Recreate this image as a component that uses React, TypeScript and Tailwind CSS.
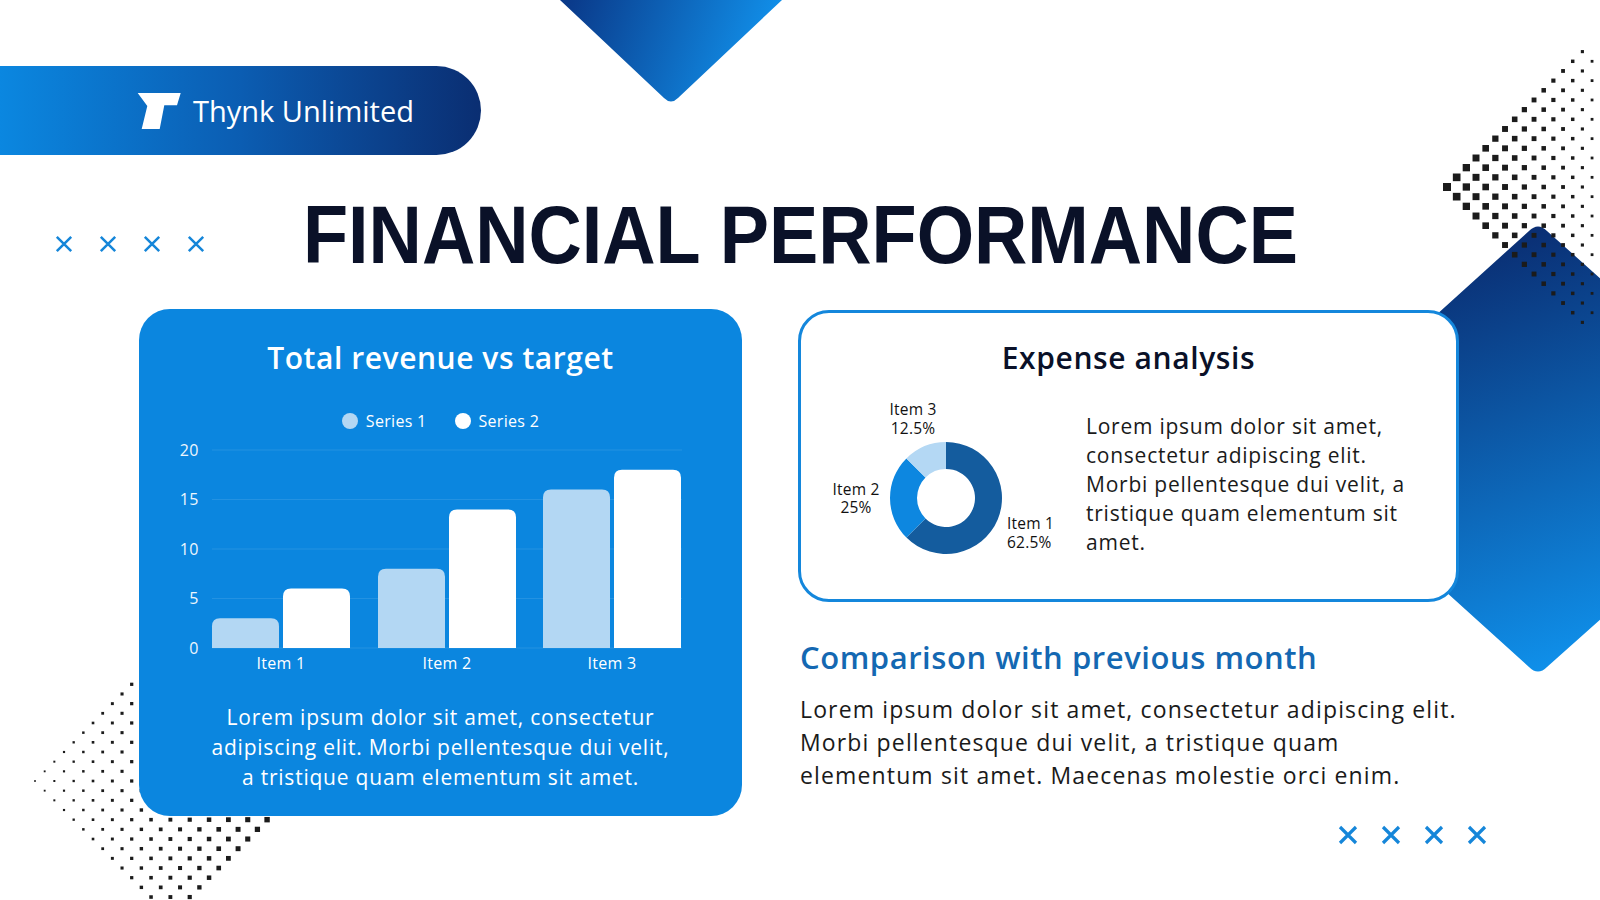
import React from "react";

const SANS = "'Open Sans', 'Liberation Sans', sans-serif";

function dotRects(
  ox: number,
  oy: number,
  step: number,
  inside: (x: number, y: number) => boolean,
  size: (x: number, y: number) => number,
  keyPrefix: string
) {
  const out: React.ReactElement[] = [];
  for (let i = -40; i <= 40; i++) {
    for (let j = -40; j <= 40; j++) {
      if (Math.abs(i + j) % 2 !== 0) continue;
      const x = ox + i * step;
      const y = oy + j * step;
      if (!inside(x, y)) continue;
      const s = size(x, y);
      out.push(
        <rect key={`${keyPrefix}-${i}-${j}`} x={x - s / 2} y={y - s / 2} width={s} height={s} fill="#1b1b1b" />
      );
    }
  }
  return out;
}

function Decorations() {
  const tr = dotRects(
    1447,
    187,
    9.67,
    (x, y) => x + y >= 1632 && y - x <= -1258 && x <= 1605 && x - y <= 1532 && x + y <= 1908,
    (x) => Math.max(2, 8 - (x - 1447) * 0.036),
    "tr"
  );
  const bl = dotRects(
    35,
    781,
    9.67,
    (x, y) => x + y >= 814 && x + y <= 1089 && y - x <= 748 && x - y <= -550 && y <= 905,
    (x) => 1.7 + (x - 35) * 0.016,
    "bl"
  );
  return (
    <svg className="absolute left-0 top-0" width={1600} height={900} viewBox="0 0 1600 900">
      <defs>
        <linearGradient id="triG" gradientUnits="userSpaceOnUse" x1="570" y1="0" x2="760" y2="70">
          <stop offset="0" stopColor="#0a3a8a" />
          <stop offset="1" stopColor="#1190ea" />
        </linearGradient>
        <linearGradient id="hexG" gradientUnits="userSpaceOnUse" x1="1480" y1="250" x2="1620" y2="640">
          <stop offset="0" stopColor="#0a2f74" />
          <stop offset="1" stopColor="#0f8fe9" />
        </linearGradient>
      </defs>
      <path d="M560,0 L664,98 Q671,105 678,98 L782,0 Z" fill="url(#triG)" />
      <path
        d="M1529,231 Q1538,222 1547,231 L1792,449 L1547,667 Q1538,676 1529,667 L1288,449 Z"
        fill="url(#hexG)"
      />
      {tr}
      {bl}
    </svg>
  );
}

function XMark({ size, stroke }: { size: number; stroke: number }) {
  return (
    <svg width={size} height={size} viewBox="0 0 20 20">
      <path d="M2,2 L18,18 M18,2 L2,18" stroke="#1586d9" strokeWidth={stroke} strokeLinecap="butt" />
    </svg>
  );
}

function barPath(x: number, w: number, top: number, base: number, r: number) {
  return `M${x},${base} L${x},${top + r} Q${x},${top} ${x + r},${top} L${x + w - r},${top} Q${x + w},${top} ${x + w},${top + r} L${x + w},${base} Z`;
}

function BarChart() {
  const base = 209;
  const unit = 9.9;
  const groups = [
    { x: 73, a: 3, b: 6, label: "Item 1" },
    { x: 239, a: 8, b: 14, label: "Item 2" },
    { x: 404, a: 16, b: 18, label: "Item 3" },
  ];
  const w = 67;
  return (
    <svg width={603} height={240} viewBox="0 0 603 240" className="block">
      {[0, 5, 10, 15, 20].map((v) => {
        const y = base - v * unit;
        return (
          <g key={v}>
            <line x1={73} x2={543} y1={y} y2={y} stroke="#ffffff" strokeOpacity={0.1} strokeWidth={1} />
            <text x={60} y={y + 5.5} textAnchor="end" fontSize={16} fill="#eef6fd" fontFamily={SANS} letterSpacing={0.5}>
              {v}
            </text>
          </g>
        );
      })}
      {groups.map((g) => (
        <g key={g.label}>
          <path d={barPath(g.x, w, base - g.a * unit, base, 8)} fill="#b3d7f3" />
          <path d={barPath(g.x + 71, w, base - g.b * unit, base, 8)} fill="#ffffff" />
          <text x={g.x + 69} y={229.5} textAnchor="middle" fontSize={16} fill="#ffffff" fontFamily={SANS} letterSpacing={0.3}>
            {g.label}
          </text>
        </g>
      ))}
    </svg>
  );
}

function Donut() {
  const cx = 145;
  const cy = 122;
  const R = 56;
  const r = 29;
  const pt = (deg: number, rad: number) => {
    const a = (deg * Math.PI) / 180;
    return [cx + rad * Math.sin(a), cy - rad * Math.cos(a)];
  };
  const seg = (a0: number, a1: number) => {
    const large = a1 - a0 > 180 ? 1 : 0;
    const [x0, y0] = pt(a0, R);
    const [x1, y1] = pt(a1, R);
    const [x2, y2] = pt(a1, r);
    const [x3, y3] = pt(a0, r);
    return `M${x0},${y0} A${R},${R} 0 ${large} 1 ${x1},${y1} L${x2},${y2} A${r},${r} 0 ${large} 0 ${x3},${y3} Z`;
  };
  const t = { fontSize: 15.5, fill: "#111111", fontFamily: SANS, letterSpacing: 0.2 } as const;
  return (
    <svg width={285} height={190} viewBox="0 0 285 190" className="block shrink-0">
      <path d={seg(0, 225)} fill="#145c9e" />
      <path d={seg(225, 315)} fill="#0d87e0" />
      <path d={seg(315, 360)} fill="#b4d8f4" />
      <text x={112} y={38.5} textAnchor="middle" {...t}>Item 3</text>
      <text x={112} y={57.5} textAnchor="middle" {...t}>12.5%</text>
      <text x={55} y={118.5} textAnchor="middle" {...t}>Item 2</text>
      <text x={55} y={137} textAnchor="middle" {...t}>25%</text>
      <text x={206} y={152.5} textAnchor="start" {...t}>Item 1</text>
      <text x={206} y={171.5} textAnchor="start" {...t}>62.5%</text>
    </svg>
  );
}

export default function App() {
  return (
    <div className="relative w-[1600px] h-[900px] overflow-hidden bg-white font-['Open_Sans','Liberation_Sans',sans-serif]">
      <Decorations />
      <div className="relative z-10 flex flex-col">
        {/* Banner */}
        <div className="mt-[66px] h-[89px] w-[481px] rounded-r-[45px] bg-linear-to-r from-[#0b87e0] via-[#0b5db2] to-[#0a2e72] flex items-center pl-[137px] gap-[12px]">
          <svg width={44} height={37} viewBox="0 0 44 37" className="shrink-0">
            <polygon points="0.7,1 43.7,1 40,13.3 27.3,13.3 22.7,37 4.7,37 10.3,14" fill="#ffffff" />
          </svg>
          <span className="text-[29px] leading-none text-white whitespace-nowrap">Thynk Unlimited</span>
        </div>

        {/* Title row */}
        <div className="h-[154px] pt-[6px] flex items-center">
          <div className="ml-[55px] mt-[18px] flex gap-[26px]">
            <XMark size={18} stroke={2.8} />
            <XMark size={18} stroke={2.8} />
            <XMark size={18} stroke={2.8} />
            <XMark size={18} stroke={2.8} />
          </div>
          <h1 className="ml-[98px] font-['Liberation_Sans',Arial,sans-serif] font-bold text-[82px] leading-none text-[#0a1128] whitespace-nowrap origin-left scale-x-90">
            FINANCIAL PERFORMANCE
          </h1>
        </div>

        {/* Main row */}
        <div className="flex items-start">
          {/* Left card */}
          <div className="ml-[139px] w-[603px] h-[507px] rounded-[31px] bg-[#0b86df] flex flex-col">
            <div className="pt-[31px] h-[67px] text-center text-[30px] leading-[36px] font-semibold tracking-[0.55px] text-white">
              Total revenue vs target
            </div>
            <div className="mt-[33px] h-[24px] flex justify-center items-center gap-[28px] text-[16px] tracking-[0.3px] text-white">
              <div className="flex items-center gap-[8px]">
                <span className="w-[16px] h-[16px] rounded-full bg-[#b3d7f3]" />
                <span>Series 1</span>
              </div>
              <div className="flex items-center gap-[8px]">
                <span className="w-[16px] h-[16px] rounded-full bg-white" />
                <span>Series 2</span>
              </div>
            </div>
            <div className="mt-[6px]">
              <BarChart />
            </div>
            <p className="mt-[23px] text-center text-[21px] leading-[30px] tracking-[0.78px] text-white whitespace-nowrap">
              Lorem ipsum dolor sit amet, consectetur
              <br />
              adipiscing elit. Morbi pellentesque dui velit,
              <br />a tristique quam elementum sit amet.
            </p>
          </div>

          {/* Right column */}
          <div className="ml-[56px] mt-[1px] w-[690px] flex flex-col">
            <div className="w-[661px] h-[292px] rounded-[31px] border-[3px] border-[#1487dc] bg-white flex flex-col">
              <div className="pt-[27px] h-[63px] text-center text-[30px] leading-[36px] font-semibold tracking-[0.6px] text-[#0a1128]">
                Expense analysis
              </div>
              <div className="flex items-start">
                <Donut />
                <p className="mt-[36px] text-[21px] leading-[29px] tracking-[0.76px] text-[#1a1a1a] whitespace-nowrap">
                  Lorem ipsum dolor sit amet,
                  <br />
                  consectetur adipiscing elit.
                  <br />
                  Morbi pellentesque dui velit, a
                  <br />
                  tristique quam elementum sit
                  <br />
                  amet.
                </p>
              </div>
            </div>
            <h2 className="mt-[35px] pl-[2px] text-[31px] leading-[40px] font-semibold tracking-[0.55px] text-[#1468b2] whitespace-nowrap">
              Comparison with previous month
            </h2>
            <p className="mt-[16px] pl-[2px] text-[23px] leading-[33px] tracking-[1.14px] text-[#1a1a1a] whitespace-nowrap">
              Lorem ipsum dolor sit amet, consectetur adipiscing elit.
              <br />
              Morbi pellentesque dui velit, a tristique quam
              <br />
              elementum sit amet. Maecenas molestie orci enim.
            </p>
            <div className="mt-[33px] flex justify-end gap-[23px] pr-[1px]">
              <XMark size={20} stroke={3.2} />
              <XMark size={20} stroke={3.2} />
              <XMark size={20} stroke={3.2} />
              <XMark size={20} stroke={3.2} />
            </div>
          </div>
        </div>
      </div>
    </div>
  );
}
